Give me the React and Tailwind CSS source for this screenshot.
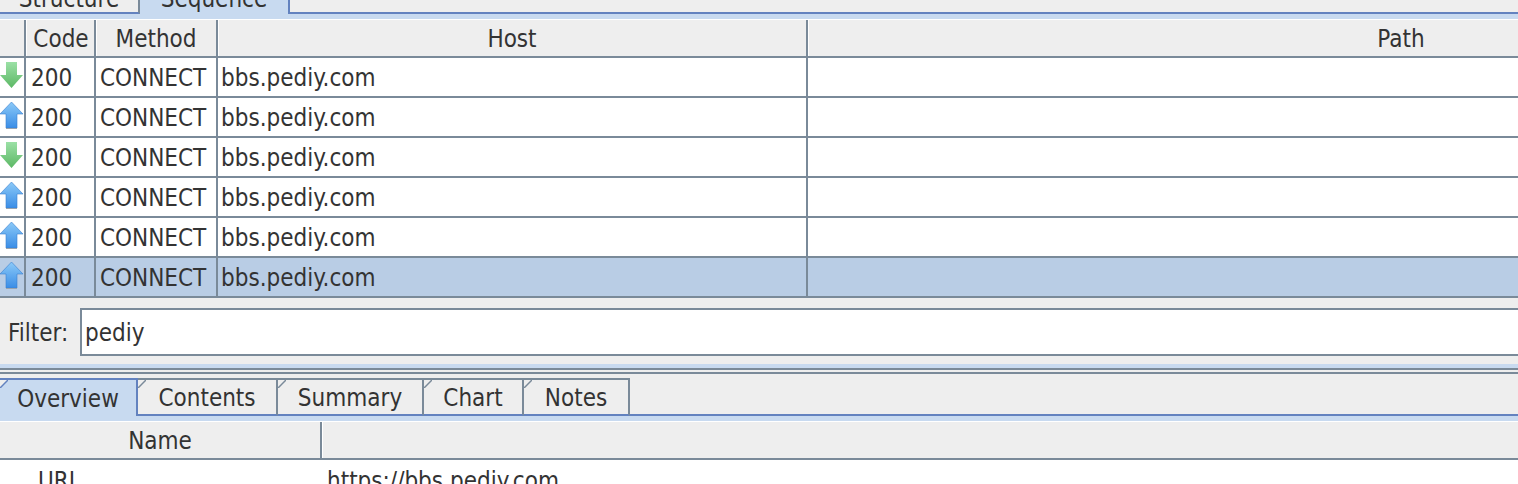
import React from "react";

const FONT = "font-['DejaVu_Sans_Condensed','DejaVu_Sans',sans-serif]";

const rows = [
  { dir: "down" },
  { dir: "up" },
  { dir: "down" },
  { dir: "up" },
  { dir: "up" },
  { dir: "up", selected: true },
];

const Arrow = ({ dir }) => {
  if (dir === "down") {
    return (
      <svg width="24" height="27" viewBox="0 0 24 27">
        <defs>
          <linearGradient id="gdown" x1="0" y1="0" x2="0" y2="1">
            <stop offset="0" stopColor="#9be0a6" />
            <stop offset="1" stopColor="#5cb865" />
          </linearGradient>
        </defs>
        <path d="M6 0 H17 V13 H23 L11.5 26 L0 13 H6 Z" fill="url(#gdown)" />
      </svg>
    );
  }
  return (
    <svg width="24" height="27" viewBox="0 0 24 27">
      <defs>
        <linearGradient id="gup" x1="0" y1="0" x2="0" y2="1">
          <stop offset="0" stopColor="#8ccaf8" />
          <stop offset="1" stopColor="#3a8de6" />
        </linearGradient>
      </defs>
      <path d="M11.5 0 L23 12 H17 V26 H6 V12 H0 Z" fill="url(#gup)" stroke="#3b7fd0" strokeWidth="0.6" />
      <path d="M6 26.5 H17" stroke="#9aa4ae" strokeWidth="1" />
    </svg>
  );
};

const Corner = ({ color }) => (
  <svg className="absolute left-0 top-0" width="8" height="8" viewBox="0 0 8 8">
    <path d="M0 0 H8 L0 8 Z" fill="#eeeeee" />
    <path d="M0 8 L8 0" stroke={color} strokeWidth="1.5" />
  </svg>
);

const bottomTabs = [
  { label: "Overview", w: "w-[138px]", active: true },
  { label: "Contents", w: "w-[140px]" },
  { label: "Summary", w: "w-[146px]" },
  { label: "Chart", w: "w-[100px]" },
  { label: "Notes", w: "w-[106px]" },
];

export default function App() {
  return (
    <div className={`w-[1518px] h-[484px] overflow-hidden bg-[#eeeeee] text-[#333333] text-[24px] ${FONT}`}>
      {/* top tab strip (scrolled, only bottom of labels shows) */}
      <div className="flex h-[14px]">
        <div className="w-[140px] h-full border-b-2 border-r-2 border-b-[#6382bf] border-r-[#7a8a99] overflow-hidden">
          <span className="block text-center leading-[24px] -mt-[13px]">Structure</span>
        </div>
        <div className="w-[150px] h-full bg-[#c8daf0] border-r-2 border-[#6382bf] overflow-hidden">
          <span className="block text-center leading-[24px] -mt-[13px]">Sequence</span>
        </div>
        <div className="flex-1 h-full border-b-2 border-[#6382bf]" />
      </div>
      <div className="h-[5px] bg-[#c8daf0]" />
      <div className="h-[1px] bg-white" />

      {/* request table */}
      <div className="w-[1994px]">
        <div className="flex h-[38px] border-b-2 border-[#7a8a99]">
          <div className="w-[26px] shrink-0 border-r-2 border-[#7a8a99]" />
          <div className="w-[70px] shrink-0 flex items-center justify-center pt-[2px] pl-[2px] border-r-2 border-[#7a8a99] shadow-[inset_1px_0_0_#ffffff]">Code</div>
          <div className="w-[122px] shrink-0 flex items-center justify-center pt-[2px] border-r-2 border-[#7a8a99] shadow-[inset_1px_0_0_#ffffff]">Method</div>
          <div className="w-[590px] shrink-0 flex items-center justify-center pt-[2px] border-r-2 border-[#7a8a99] shadow-[inset_1px_0_0_#ffffff]">Host</div>
          <div className="w-[1186px] shrink-0 flex items-center justify-center pt-[2px] shadow-[inset_1px_0_0_#ffffff]">Path</div>
        </div>
        {rows.map((r, i) => (
          <div
            key={i}
            className={`flex h-[40px] border-b-2 border-[#7a8a99] ${r.selected ? "bg-[#b9cde5]" : "bg-white"}`}
          >
            <div className="w-[26px] shrink-0 border-r-2 border-[#7a8a99] pt-[4px] overflow-hidden">
              <Arrow dir={r.dir} />
            </div>
            <div className="w-[70px] shrink-0 flex items-center pt-[2px] pl-[5px] border-r-2 border-[#7a8a99]">200</div>
            <div className="w-[122px] shrink-0 flex items-center pt-[2px] pl-[4px] border-r-2 border-[#7a8a99]">CONNECT</div>
            <div className="w-[590px] shrink-0 flex items-center pt-[2px] pl-[3px] border-r-2 border-[#7a8a99]">bbs.pediy.com</div>
            <div className="w-[1186px] shrink-0" />
          </div>
        ))}
      </div>

      {/* filter */}
      <div className="flex pt-[10px] pb-[8px]">
        <label className="w-[80px] shrink-0 h-[48px] flex items-center pt-[2px] pl-[8px]">Filter:</label>
        <input
          readOnly
          value="pediy"
          className={`w-[1460px] shrink-0 h-[48px] border-2 border-[#7a8a99] bg-white pl-[3px] pt-[2px] outline-none text-[24px] text-[#333333] ${FONT}`}
        />
      </div>

      {/* splitter */}
      <div className="h-[4px] bg-[#c8daf0]" />
      <div className="h-[2px] bg-[#7a8a99]" />
      <div className="h-[2px] bg-[#eeeeee]" />
      <div className="h-[2px] bg-[#7a8a99]" />

      {/* detail tabs */}
      <div className="flex items-end h-[42px]">
        {bottomTabs.map((t) => (
          <div
            key={t.label}
            className={`relative ${t.w} h-[38px] flex items-center justify-center pt-[2px] border-t-2 border-r-2 ${
              t.active
                ? "bg-[#c8daf0] border-[#6382bf]"
                : "bg-[#eeeeee] border-t-[#7a8a99] border-r-[#7a8a99] border-b-2 border-b-[#6382bf]"
            }`}
          >
            <Corner color={t.active ? "#6382bf" : "#7a8a99"} />
            <span>{t.label}</span>
          </div>
        ))}
        <div className="flex-1 border-b-2 border-[#6382bf]" />
      </div>
      <div className="h-[5px] bg-[#c8daf0]" />
      <div className="h-[1px] bg-white" />

      <div className="flex h-[38px] border-b-2 border-[#7a8a99]">
        <div className="w-[322px] shrink-0 flex items-center justify-center pt-[2px] border-r-2 border-[#7a8a99]">Name</div>
        <div className="flex-1 shadow-[inset_1px_0_0_#ffffff]" />
      </div>
      <div className="flex h-[40px] bg-white">
        <div className="w-[322px] shrink-0 flex items-center pt-[2px] pl-[38px]">URL</div>
        <div className="flex-1 flex items-center pt-[2px] pl-[5px]">https://bbs.pediy.com</div>
      </div>
    </div>
  );
}
